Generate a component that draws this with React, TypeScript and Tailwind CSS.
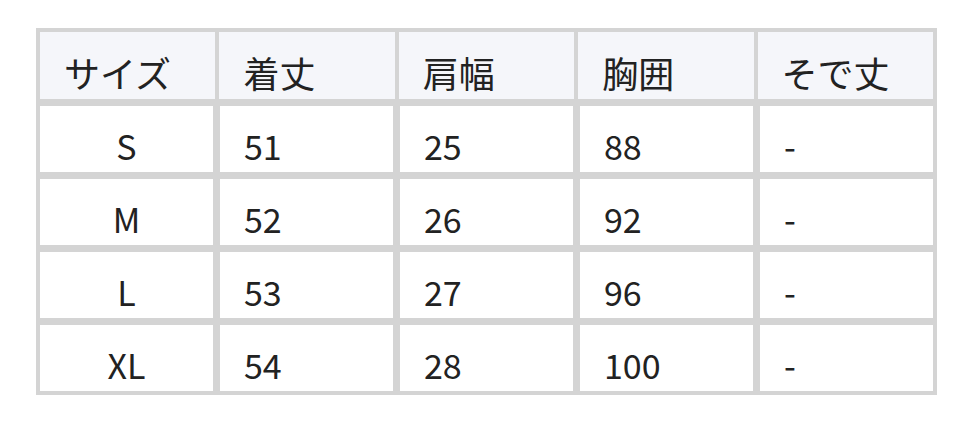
const headers = ['サイズ', '着丈', '肩幅', '胸囲', 'そで丈'];

const rows = [
  ['S', '51', '25', '88', '-'],
  ['M', '52', '26', '92', '-'],
  ['L', '53', '27', '96', '-'],
  ['XL', '54', '28', '100', '-'],
];

export default function App() {
  return (
    <div
      className="w-[972px] h-[422px] bg-white pt-[28px] pl-[36px] text-[#222] text-[34px] leading-none"
      style={{ fontFamily: '"Noto Sans CJK JP", "Noto Sans", sans-serif' }}
    >
      <div className="w-[901px] bg-[#d4d4d4] p-[4px] flex flex-col gap-[7px]">
        <div className="grid grid-cols-5 gap-x-[4px]">
          {headers.map(h => (
            <div key={h} className="h-[67px] bg-[#f5f6fa] flex items-end pl-[24px] pb-[9px] text-[36px]">
              {h}
            </div>
          ))}
        </div>
        {rows.map(r => (
          <div key={r[0]} className="grid grid-cols-5 gap-x-[7px]">
            {r.map((c, i) => (
              <div
                key={i}
                className={`h-[66px] bg-white flex items-end pb-[9px] ${i === 0 ? 'justify-center' : 'pl-[24px]'}`}
              >
                {c}
              </div>
            ))}
          </div>
        ))}
      </div>
    </div>
  );
}
